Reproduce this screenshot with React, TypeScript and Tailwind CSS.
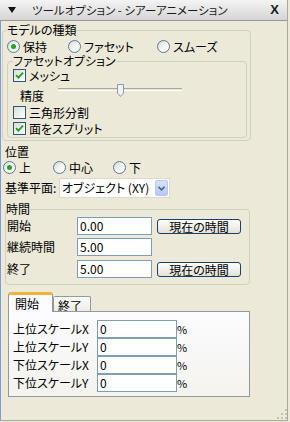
import type { ReactNode } from "react";

const jp = "font-['Noto_Sans_CJK_JP','Noto_Sans_CJK_SC',sans-serif] [font-feature-settings:'palt']";

function Radio({ checked }: { checked?: boolean }) {
  return (
    <span className="flex h-[13px] w-[13px] shrink-0 items-center justify-center rounded-full border border-[#5b7896] bg-gradient-to-br from-[#d6d6cf] via-[#f4f4f2] to-white">
      {checked ? <span className="h-[5px] w-[5px] rounded-full bg-[#2aa12a]" /> : null}
    </span>
  );
}

function Check({ checked }: { checked?: boolean }) {
  return (
    <span className="flex h-[13px] w-[13px] shrink-0 items-center justify-center border border-[#2b5878] bg-gradient-to-br from-[#dcdcd6] to-white">
      {checked ? (
        <svg width="9" height="9" viewBox="0 0 9 9">
          <path d="M1 4.2 L3.4 6.6 L8 1.6" stroke="#22a022" strokeWidth="1.9" fill="none" />
        </svg>
      ) : null}
    </span>
  );
}

function RadioItem({ label, checked, w }: { label: string; checked?: boolean; w: string }) {
  return (
    <div className={`flex items-center gap-[3px] ${w}`}>
      <Radio checked={checked} />
      <span className="leading-[13px]">{label}</span>
    </div>
  );
}

function NowButton() {
  return (
    <div className="ml-[5px] mt-[2px] flex h-[15px] w-[84px] items-center justify-center rounded-[3px] border border-[#1f3f66] bg-gradient-to-b from-white to-[#e2e1d8] leading-[13px]">
      現在の時間
    </div>
  );
}

function Field({ value, w }: { value: string; w: string }) {
  return (
    <div className={`flex h-[18px] items-center border border-[#7f9db9] bg-white pl-[2px] leading-[14px] ${w}`}>
      {value}
    </div>
  );
}

function TimeRow({ label, value, button, mt }: { label: string; value: string; button?: boolean; mt: string }) {
  return (
    <div className={`flex h-[18px] items-start ${mt}`}>
      <div className="flex h-[18px] w-[71px] items-center pl-[1px]">{label}</div>
      <Field value={value} w="w-[75px]" />
      {button ? <NowButton /> : null}
    </div>
  );
}

function ScaleRow({ label }: { label: string }) {
  return (
    <div className="flex h-[18px] items-center">
      <div className="w-[88px] pl-[4px] leading-[14px]">{label}</div>
      <Field value="0" w="w-[80px]" />
      <span className="text-[11px] leading-[12px]">%</span>
    </div>
  );
}

function Group({ title, className, children }: { title: string; className: string; children: ReactNode }) {
  return (
    <fieldset className={`rounded-[4px] border border-[#d0d0bf] ${className}`}>
      <legend className="leading-[14px]">{title}</legend>
      {children}
    </fieldset>
  );
}

export default function App() {
  return (
    <div className={`relative h-[422px] w-[290px] overflow-hidden bg-[#ece9d8] text-[12px] leading-[14px] text-black ${jp}`}>
      <div className="flex h-[421px] w-[288px] flex-col border-r border-b border-[#a9a89d]">
        <div className="flex h-[21px] shrink-0 items-center border-b border-[#9a9a9a] bg-gradient-to-b from-[#f4f4f4] to-[#d5d5d5] text-[#1a1a1a]">
          <svg className="ml-[8px]" width="8" height="6" viewBox="0 0 8 6">
            <path d="M0 0 H8 L4 6 Z" fill="#111" />
          </svg>
          <span className="ml-[16px] text-[11.5px] leading-[14px]">ツールオプション - シアーアニメーション</span>
          <span className="ml-auto mr-[8px] font-['Liberation_Sans',sans-serif] text-[13px] font-bold leading-[14px]">X</span>
        </div>

        <div className="flex flex-1 flex-col border-l border-[#7d9bd6] pl-[1px]">
          <Group title="モデルの種類" className="mt-[2px] w-[249px] pb-[2px] pl-[4px] pr-[3px]">
            <div className="mt-[2px] flex h-[15px] items-center">
              <RadioItem label="保持" checked w="w-[61px]" />
              <RadioItem label="ファセット" w="w-[89px]" />
              <RadioItem label="スムーズ" w="w-[80px]" />
            </div>
            <Group title="ファセットオプション" className="w-[240px] pb-[1px] pl-[5px]">
              <div className="flex h-[14px] items-center gap-[3px]">
                <Check checked />
                <span className="leading-[13px]">メッシュ</span>
              </div>
              <div className="flex h-[22px]">
                <span className="mb-[1px] w-[45px] self-end pl-[7px] leading-[14px]">精度</span>
                <div className="relative mt-[2px] h-[13px] w-[124px]">
                  <div className="absolute left-0 right-0 top-[4px] h-[3px] border-t border-[#a8a89c] border-b border-b-white bg-[#e6e4d8]" />
                  <svg className="absolute left-[59px] top-0" width="7" height="13" viewBox="0 0 7 13">
                    <path d="M0.5 0.5 H6.5 V9 L3.5 12.5 L0.5 9 Z" fill="#f3f3ef" stroke="#8c9aa8" />
                  </svg>
                </div>
              </div>
              <div className="flex h-[16px] items-center gap-[3px]">
                <Check />
                <span className="leading-[13px]">三角形分割</span>
              </div>
              <div className="flex h-[16px] items-center gap-[3px]">
                <Check checked />
                <span className="leading-[13px]">面をスプリット</span>
              </div>
            </Group>
          </Group>

          <div className="mt-[4px] pl-[3px] leading-[14px]">位置</div>
          <div className="ml-[1px] mt-[1px] flex h-[14px] items-center">
            <RadioItem label="上" checked w="w-[50px]" />
            <RadioItem label="中心" w="w-[60px]" />
            <RadioItem label="下" w="w-[40px]" />
          </div>

          <div className="mt-[4px] flex h-[20px] items-center pl-[3px]">
            <span className="w-[54px]">基準平面:</span>
            <div className="flex h-[20px] w-[111px] items-center border border-[#dcdad0] bg-white">
              <span className="flex-1 pl-[2px] leading-[14px]">オブジェクト (XY)</span>
              <div className="mr-[1px] flex h-[16px] w-[13px] items-center justify-center rounded-[2px] border border-[#b3c8f5] bg-gradient-to-b from-[#d7e2fc] to-[#b4c9f6]">
                <svg width="7" height="5" viewBox="0 0 7 5">
                  <path d="M0.5 0.8 L3.5 3.8 L6.5 0.8" stroke="#4d6185" strokeWidth="1.6" fill="none" />
                </svg>
              </div>
            </div>
          </div>

          <Group title="時間" className="ml-[3px] mt-[4px] w-[245px] pb-[6px]">
            <TimeRow label="開始" value="0.00" button mt="mt-[1px]" />
            <TimeRow label="継続時間" value="5.00" mt="mt-[3px]" />
            <TimeRow label="終了" value="5.00" button mt="mt-[4px]" />
          </Group>

          <div className="ml-[6px] mt-[7px] flex h-[20px] items-start">
            <div className="relative z-10 h-[20px] w-[45px] rounded-t-[3px] border-x border-t-[3px] border-x-[#919b9c] border-t-[#f3b13e] bg-[#fcfcfe] pl-[6px] pt-[2px] leading-[14px]">
              開始
            </div>
            <div className="mt-[4px] h-[15px] w-[38px] rounded-t-[2px] border-x border-t border-[#919b9c] bg-gradient-to-b from-white to-[#ecebe5] pl-[4px] pt-[3px] leading-[11px]">
              終了
            </div>
          </div>
          <div className="-mt-[1px] ml-[6px] w-[242px] border border-[#919b9c] bg-gradient-to-b from-[#fcfcfe] to-[#f4f3ee] pb-[4px] pt-[8px]">
            <ScaleRow label="上位スケールX" />
            <ScaleRow label="上位スケールY" />
            <ScaleRow label="下位スケールX" />
            <ScaleRow label="下位スケールY" />
          </div>
        </div>
      </div>
      <svg className="absolute bottom-[3px] right-[3px]" width="11" height="11" viewBox="0 0 11 11">
        {[
          [9, 1],
          [9, 5],
          [5, 5],
          [9, 9],
          [5, 9],
          [1, 9],
        ].map(([x, y]) => (
          <rect key={`${x}-${y}`} x={x} y={y} width="2" height="2" fill="#c4c2b4" />
        ))}
      </svg>
    </div>
  );
}
